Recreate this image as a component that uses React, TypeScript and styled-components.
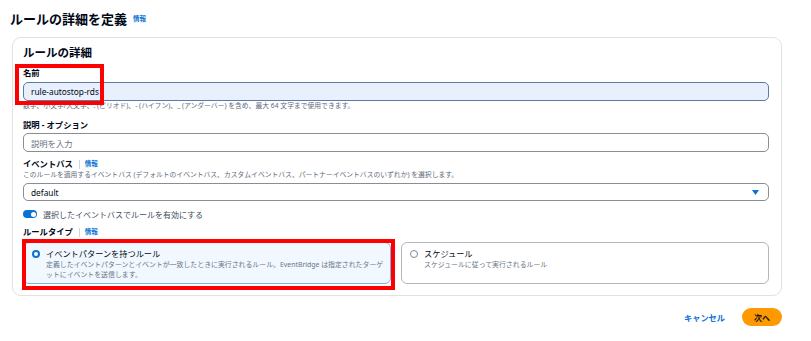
import styled, { createGlobalStyle } from 'styled-components';

const GlobalStyle = createGlobalStyle`
  html, body {
    margin: 0;
    padding: 0;
    background: #ffffff;
  }
  body {
    font-family: 'Noto Sans', 'Noto Sans CJK JP', sans-serif;
    color: #000716;
  }
  * {
    box-sizing: border-box;
  }
`;

const Page = styled.div`
  width: 811px;
  height: 341px;
  padding: 0 29px 0 12px;
`;

const Header = styled.header`
  height: 37px;
  margin-left: -2px;
  display: flex;
  align-items: center;
  gap: 6px;
  h1 {
    margin: 0;
    font-size: 13px;
    font-weight: 700;
    line-height: 18px;
  }
`;

const InfoLink = styled.a`
  color: #0972d3;
  font-size: 6.5px;
  font-weight: 700;
  text-decoration: none;
  line-height: 10px;
`;

const Card = styled.section`
  border: 1px solid #e2e2e2;
  border-radius: 9px;
  padding: 7px 12px 11px 10px;
  h2 {
    margin: 0;
    font-size: 11.5px;
    font-weight: 700;
    line-height: 16px;
  }
`;

const Field = styled.div<{ $top: number }>`
  position: relative;
  margin-top: ${(p) => p.$top}px;
  display: flex;
  flex-direction: column;
`;

const Label = styled.div<{ $gap?: number }>`
  display: flex;
  align-items: center;
  font-size: 8.3px;
  font-weight: 700;
  line-height: 12px;
  margin-bottom: ${(p) => p.$gap ?? 0}px;
`;

const Divider = styled.span`
  width: 1px;
  height: 9px;
  background: #d1d5db;
  margin: 0 5px 0 6px;
`;

const Hint = styled.div<{ $gap?: number }>`
  font-size: 6.8px;
  line-height: 10px;
  color: #5f6b7a;
  margin-bottom: ${(p) => p.$gap ?? 0}px;
  white-space: nowrap;
`;

const Input = styled.div<{ $focused?: boolean; $placeholder?: boolean }>`
  height: 19px;
  border-radius: 5px;
  border: 1px solid ${(p) => (p.$focused ? '#5b7ba6' : '#8c8c94')};
  background: ${(p) => (p.$focused ? '#e8f0fe' : '#ffffff')};
  display: flex;
  align-items: center;
  padding: 0 7px;
  font-size: 8.3px;
  color: ${(p) => (p.$placeholder ? '#6b7280' : '#000716')};
`;

const Caret = styled.span`
  width: 1px;
  height: 10px;
  margin-left: 1px;
  background: #000716;
`;

const Select = styled(Input)`
  height: 18px;
  justify-content: space-between;
  padding-right: 9px;
`;

const ToggleRow = styled.div`
  margin-top: 7px;
  height: 12px;
  display: flex;
  align-items: center;
  gap: 6px;
  font-size: 8px;
  color: #414d5c;
`;

const Toggle = styled.span`
  width: 14px;
  height: 8px;
  border-radius: 4px;
  background: #0972d3;
  position: relative;
  &::after {
    content: '';
    position: absolute;
    right: 1.5px;
    top: 1.5px;
    width: 5px;
    height: 5px;
    border-radius: 50%;
    background: #ffffff;
  }
`;

const Tiles = styled.div`
  display: grid;
  grid-template-columns: 1fr 1fr;
  gap: 10px;
  position: relative;
`;

const Tile = styled.div<{ $selected?: boolean }>`
  height: 42px;
  border-radius: 6px;
  border: 1px solid ${(p) => (p.$selected ? '#7fb3e8' : '#b6b6bc')};
  background: ${(p) => (p.$selected ? '#f1f8ff' : '#ffffff')};
  padding: 4px 4px 4px 8px;
  display: grid;
  grid-template-columns: 8px 1fr;
  column-gap: 6px;
  align-items: start;
`;

const Radio = styled.span<{ $checked?: boolean }>`
  margin-top: 3px;
  width: 8px;
  height: 8px;
  border-radius: 50%;
  border: ${(p) => (p.$checked ? '2.5px solid #0972d3' : '1px solid #7d8998')};
  background: #ffffff;
`;

const TileTitle = styled.div`
  font-size: 8.2px;
  line-height: 13px;
  color: #000716;
`;

const TileDesc = styled.div`
  font-size: 6.9px;
  line-height: 9.5px;
  color: #6b7685;
`;

const Mark = styled.div<{ $l: number; $t: number; $w: number; $h: number }>`
  position: absolute;
  left: ${(p) => p.$l}px;
  top: ${(p) => p.$t}px;
  width: ${(p) => p.$w}px;
  height: ${(p) => p.$h}px;
  border: 4px solid #ff0000;
  pointer-events: none;
`;

const Footer = styled.footer`
  display: flex;
  justify-content: flex-end;
  align-items: center;
  gap: 17px;
  margin-top: 12px;
`;

const Cancel = styled.button`
  border: none;
  background: none;
  padding: 0;
  color: #0972d3;
  font-family: inherit;
  font-size: 8.2px;
  font-weight: 700;
`;

const Primary = styled.button`
  width: 40px;
  height: 18px;
  border: none;
  border-radius: 9px;
  background: #ff9900;
  color: #0f141a;
  font-family: inherit;
  font-size: 8px;
  font-weight: 700;
  padding: 0;
`;

export default function App() {
  return (
    <>
      <GlobalStyle />
      <Page>
        <Header>
          <h1>ルールの詳細を定義</h1>
          <InfoLink>情報</InfoLink>
        </Header>
        <Card>
          <h2>ルールの詳細</h2>
          <Field $top={6}>
            <Label $gap={3}>名前</Label>
            <Input $focused>
              rule-autostop-rds
              <Caret />
            </Input>
            <Hint>
              数字、小文字/大文字、. (ピリオド)、- (ハイフン)、_ (アンダーバー) を含め、最大 64 文字まで使用できます。
            </Hint>
            <Mark $l={-8} $t={-3} $w={89} $h={41} />
          </Field>
          <Field $top={8}>
            <Label $gap={2}>説明 - オプション</Label>
            <Input $placeholder>説明を入力</Input>
          </Field>
          <Field $top={6}>
            <Label>
              イベントバス
              <Divider />
              <InfoLink>情報</InfoLink>
            </Label>
            <Hint $gap={3}>
              このルールを適用するイベントバス (デフォルトのイベントバス、カスタムイベントバス、パートナーイベントバスのいずれか) を選択します。
            </Hint>
            <Select>
              default
              <svg width="7" height="5" viewBox="0 0 7 5">
                <path d="M0 0 H7 L3.5 5 Z" fill="#0972d3" />
              </svg>
            </Select>
          </Field>
          <ToggleRow>
            <Toggle />
            選択したイベントバスでルールを有効にする
          </ToggleRow>
          <Field $top={6}>
            <Label $gap={4}>
              ルールタイプ
              <Divider />
              <InfoLink>情報</InfoLink>
            </Label>
            <Tiles>
              <Tile $selected>
                <Radio $checked />
                <div>
                  <TileTitle>イベントパターンを持つルール</TileTitle>
                  <TileDesc>
                    定義したイベントパターンとイベントが一致したときに実行されるルール。EventBridge は指定されたターゲットにイベントを送信します。
                  </TileDesc>
                </div>
              </Tile>
              <Tile>
                <Radio />
                <div>
                  <TileTitle>スケジュール</TileTitle>
                  <TileDesc>スケジュールに従って実行されるルール</TileDesc>
                </div>
              </Tile>
              <Mark $l={-1} $t={-3} $w={373} $h={51} />
            </Tiles>
          </Field>
        </Card>
        <Footer>
          <Cancel>キャンセル</Cancel>
          <Primary>次へ</Primary>
        </Footer>
      </Page>
    </>
  );
}
